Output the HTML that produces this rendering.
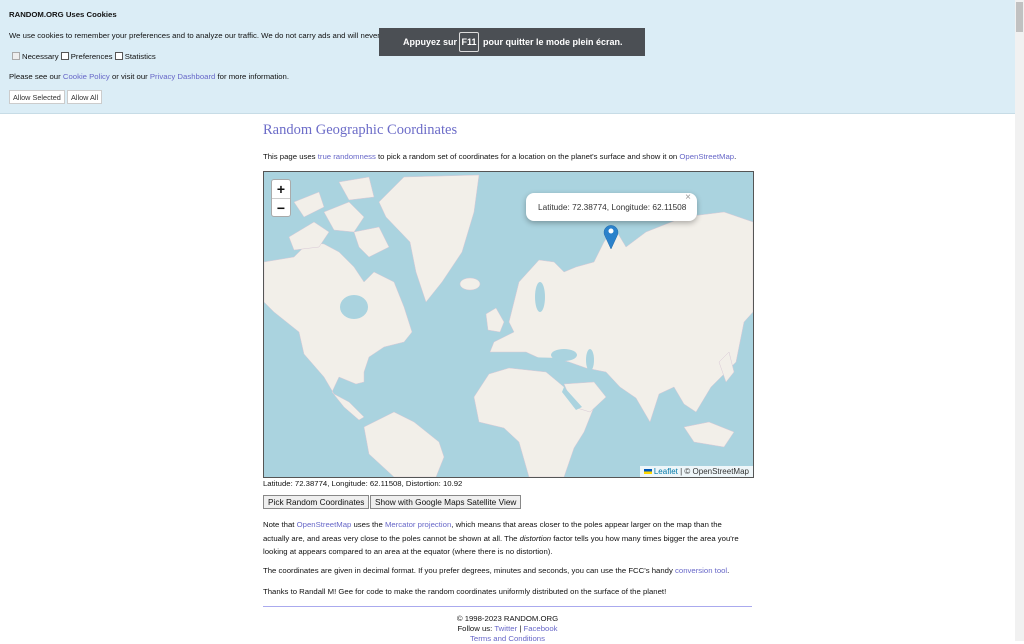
<!DOCTYPE html>
<html><head><meta charset="utf-8"><style>
*{margin:0;padding:0;box-sizing:border-box}
body{width:1024px;height:641px;overflow:hidden;background:#fff;font-family:"Liberation Sans",sans-serif;font-size:7.75px;color:#111;position:relative}
a{color:#6767c8;text-decoration:none}
.ab{position:absolute;white-space:nowrap}
#ck{position:absolute;left:0;top:0;width:1015px;height:114px;background:#dbedf6;border-bottom:1px solid #c7dce6}
.btn{position:absolute;background:#fff;border:1px solid #ccc;font-size:7.3px;color:#333;padding:2px 3px;height:14px;line-height:9px}
.cb{display:inline-block;width:8px;height:8px;border:1px solid #555;background:#fff;vertical-align:-1px;margin-right:2px}
#toast{position:absolute;left:379px;top:28px;width:266px;height:28px;background:#4b4f54;color:#fff;font-size:9px;font-weight:bold}
#map{position:absolute;left:263px;top:171px;width:491px;height:307px;border:1px solid #555;background:#aad3df;overflow:hidden}
.gb{position:absolute;background:#efefef;border:1px solid #888;font-size:8.3px;height:14px;line-height:12px;padding:0 4px;color:#111}
#sb{position:absolute;left:1015px;top:0;width:9px;height:641px;background:#f1f1f1}
</style></head><body>
<div id="ck">
<div class="ab" style="left:9px;top:10px;font-weight:bold;font-size:7.75px">RANDOM.ORG Uses Cookies</div>
<div class="ab" style="left:9px;top:31px">We use cookies to remember your preferences and to analyze our traffic. We do not carry ads and will never sell your data to third parties.</div>
<div class="ab" style="left:12px;top:52px"><span class="cb" style="border-color:#aaa;background:#eee"></span>Necessary <span class="cb"></span>Preferences <span class="cb"></span>Statistics</div>
<div class="ab" style="left:9px;top:72px">Please see our <a>Cookie Policy</a> or visit our <a>Privacy Dashboard</a> for more information.</div>
<div class="btn" style="left:9px;top:90px">Allow Selected</div>
<div class="btn" style="left:67px;top:90px">Allow All</div>
</div>
<div id="toast"><span class="ab" style="left:24px;top:9px">Appuyez sur</span><span class="ab" style="left:80px;top:4px;width:20px;height:20px;border:1px solid #ddd;border-radius:2px;text-align:center;line-height:18px">F11</span><span class="ab" style="left:104px;top:9px">pour quitter le mode plein écran.</span></div>

<div class="ab" style="left:263px;top:122px;font-family:'Liberation Serif',serif;font-size:14.5px;color:#6c6cc8">Random Geographic Coordinates</div>
<div class="ab" style="left:263px;top:152px">This page uses <a>true randomness</a> to pick a random set of coordinates for a location on the planet's surface and show it on <a>OpenStreetMap</a>.</div>

<div id="map">
<svg width="489" height="305" viewBox="0 0 489 305" style="position:absolute;left:0;top:0">
<g fill="#f2efe9" stroke="#d9c9d6" stroke-width="0.5">
<path d="M0,90 L30,85 L45,70 L60,72 L75,80 L90,95 L100,110 L110,100 L130,110 L140,135 L148,160 L140,170 L120,175 L105,185 L100,200 L100,210 L92,212 L75,205 L68,220 L80,235 L95,248 L100,245 L85,230 L70,222 L60,205 L40,182 L35,160 L10,140 L0,130Z"/>
<path d="M25,65 L50,50 L65,60 L55,75 L30,78Z M60,40 L85,30 L100,45 L90,60 L70,58Z M90,60 L115,55 L125,75 L105,85 L95,75Z M30,30 L55,20 L60,35 L40,45Z M75,10 L105,5 L110,25 L85,28Z"/>
<path d="M115,30 L140,5 L215,3 L210,40 L198,80 L178,110 L162,130 L152,100 L146,70 L122,45Z"/>
<ellipse cx="206" cy="112" rx="10" ry="6"/>
<path d="M100,255 L130,240 L150,250 L175,270 L180,285 L172,305 L130,305 L105,282Z"/>
<path d="M245,150 L255,110 L275,88 L290,90 L300,100 L312,95 L330,90 L340,70 L350,55 L362,75 L382,60 L420,45 L460,40 L489,50 L489,140 L480,150 L472,190 L462,200 L447,215 L432,240 L420,232 L410,215 L395,222 L386,250 L372,226 L356,215 L342,200 L322,196 L305,190 L290,186 L275,186 L262,180 L240,180 L226,180 L230,170 L250,160Z"/>
<path d="M222,142 L232,136 L240,150 L236,160 L224,158Z"/>
<path d="M210,225 L225,202 L245,196 L282,200 L300,215 L310,235 L330,235 L320,260 L310,276 L300,305 L265,305 L255,270 L240,256 L215,250Z"/>
<path d="M300,212 L330,210 L342,225 L326,240 L310,235Z"/>
<path d="M420,255 L445,250 L470,260 L460,275 L430,270Z M455,190 L465,180 L470,200 L462,210Z"/>
</g>
<g fill="#aad3df">
<ellipse cx="90" cy="135" rx="14" ry="12"/>
<ellipse cx="300" cy="183" rx="13" ry="6"/>
<ellipse cx="326" cy="188" rx="4" ry="11"/>
<ellipse cx="276" cy="125" rx="5" ry="15"/>
<path d="M238,184 L290,186 L300,200 L270,198 L240,195Z"/>
<path d="M300,215 L318,235 L312,238 L298,220Z"/>
</g>
</svg>
<div class="ab" style="left:7px;top:7px;width:20px;height:38px;background:#fff;border:1px solid #aaa;border-radius:3px;font-size:14px;font-weight:bold;text-align:center;line-height:18px">+<br><span style="display:block;border-top:1px solid #ccc">−</span></div>
<div class="ab" style="left:262px;top:21px;width:171px;height:28px;background:#fff;border-radius:8px;box-shadow:0 2px 6px rgba(0,0,0,.3);font-size:8.3px;color:#333;line-height:28px;padding-left:12px">Latitude: 72.38774, Longitude: 62.11508<span class="ab" style="right:6px;top:-9px;color:#999;font-size:10px">×</span></div>
<svg class="ab" style="left:339px;top:50px" width="16" height="28" viewBox="0 0 16 28"><path d="M8,27 L2,14 A7,7 0 1 1 14,14Z" fill="#2b82cb" stroke="#2169a8" stroke-width="0.5"/><circle cx="8" cy="9" r="2.5" fill="#fff"/></svg>
<div class="ab" style="right:0;bottom:0;background:rgba(255,255,255,.8);font-size:8px;padding:1px 4px;color:#333"><span style="display:inline-block;width:8px;height:5px;background:linear-gradient(#0057b7 50%,#ffd700 50%);vertical-align:0"></span> <a style="color:#0078a8">Leaflet</a> | © OpenStreetMap</div>
</div>

<div class="ab" style="left:263px;top:479px">Latitude: 72.38774, Longitude: 62.11508, Distortion: 10.92</div>
<div class="gb" style="left:263px;top:495px">Pick Random Coordinates</div>
<div class="gb" style="left:370px;top:495px">Show with Google Maps Satellite View</div>
<div class="ab" style="left:263px;top:518px;line-height:13.5px">Note that <a>OpenStreetMap</a> uses the <a>Mercator projection</a>, which means that areas closer to the poles appear larger on the map than the<br>actually are, and areas very close to the poles cannot be shown at all. The <i>distortion</i> factor tells you how many times bigger the area you're<br>looking at appears compared to an area at the equator (where there is no distortion).</div>
<div class="ab" style="left:263px;top:566px">The coordinates are given in decimal format. If you prefer degrees, minutes and seconds, you can use the FCC's handy <a>conversion tool</a>.</div>
<div class="ab" style="left:263px;top:587px">Thanks to Randall M! Gee for code to make the random coordinates uniformly distributed on the surface of the planet!</div>
<div class="ab" style="left:263px;top:606px;width:489px;height:1px;background:#aaaaee"></div>
<div class="ab" style="left:263px;top:614px;width:489px;text-align:center;line-height:10px">© 1998-2023 RANDOM.ORG<br>Follow us: <a>Twitter</a> | <a>Facebook</a><br><a>Terms and Conditions</a></div>
<div id="sb"><div style="position:absolute;left:1px;top:2px;width:7px;height:30px;background:#c1c1c1"></div></div>
</body></html>
